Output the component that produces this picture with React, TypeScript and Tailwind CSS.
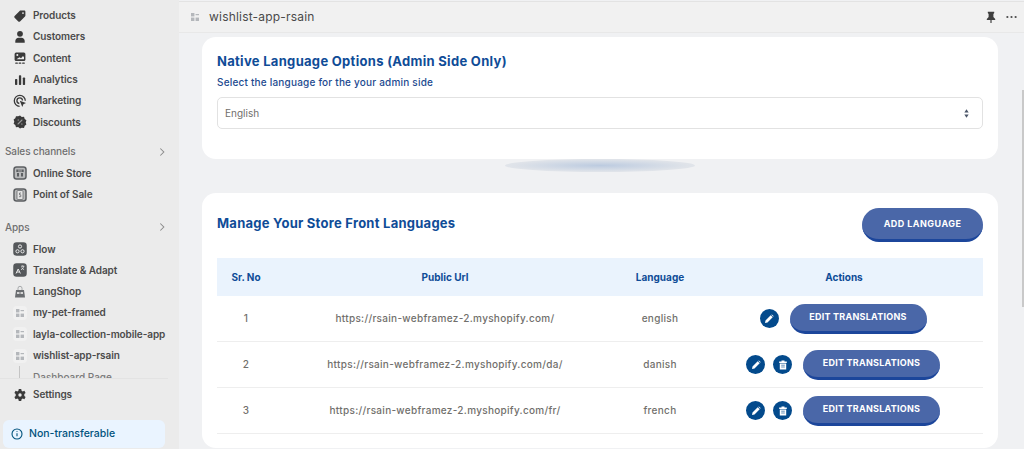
import React from "react";

const Tile = ({ children, soft }: { children: React.ReactNode; soft?: boolean }) => (
  <svg viewBox="0 0 14 14" className="h-[14px] w-[14px]">
    <rect
      x="1"
      y="1"
      width="12"
      height="12"
      rx="2.500"
      fill={soft ? "#b9babb" : "#55585b"}
      stroke={soft ? "#5c5f62" : "#55585b"}
      strokeWidth="1.500"
    />
    {children}
  </svg>
);

const AppDot = () => (
  <span className="flex h-[14px] w-[14px] items-center justify-center rounded-sm bg-[#f1f1f1]">
    <svg viewBox="0 0 8 8" className="h-[8px] w-[8px]" fill="#b4b7bb">
      <rect x="0" y="0" width="3.400" height="3.400" />
      <rect x="4.600" y="1" width="3.400" height="1.200" />
      <rect x="0" y="4.600" width="3.400" height="3.400" />
      <rect x="4.600" y="4.600" width="3.400" height="3.400" />
    </svg>
  </span>
);

const icons: Record<string, React.ReactNode> = {
  products: (
    <svg viewBox="0 0 14 14" className="h-[14px] w-[14px]" fill="#3a3a3a">
      <path d="M7.600 1.600h3.600c.7 0 1.200.5 1.200 1.200v3.600c0 .4-.1.7-.4 1l-5 5c-.5.5-1.200.5-1.700 0L1.600 8.700c-.5-.5-.5-1.200 0-1.700l5-5c.3-.3.600-.4 1-.4zM10 3.200a.9.9 0 1 0 0 1.800.9.9 0 0 0 0-1.800z" />
    </svg>
  ),
  customers: (
    <svg viewBox="0 0 14 14" className="h-[14px] w-[14px]" fill="#3a3a3a">
      <circle cx="7" cy="3.800" r="2.900" />
      <path d="M2.300 12.800v-1.700c0-2 1.500-3.300 3.300-3.300h2.800c1.800 0 3.300 1.300 3.300 3.300v1.700z" />
    </svg>
  ),
  content: (
    <svg viewBox="0 0 14 14" className="h-[14px] w-[14px]">
      <rect x="1.600" y="1.500" width="10.800" height="8.500" rx="1.500" fill="#3a3a3a" />
      <circle cx="4.300" cy="4" r="1" fill="#ebebeb" />
      <path d="M3.500 8.300l3-2 1.500 1 2-2.300 1 1.300v2z" fill="#ebebeb" />
      <rect x="2.200" y="11.500" width="2.700" height="1.200" rx=".5" fill="#3a3a3a" />
      <rect x="5.600" y="11.500" width="2.700" height="1.200" rx=".5" fill="#3a3a3a" />
      <rect x="9.100" y="11.500" width="2.700" height="1.200" rx=".5" fill="#3a3a3a" />
    </svg>
  ),
  analytics: (
    <svg viewBox="0 0 14 14" className="h-[14px] w-[14px]" fill="#3a3a3a">
      <rect x="2" y="6" width="2.300" height="6" rx=".7" />
      <rect x="5.900" y="2.200" width="2.300" height="9.800" rx=".7" />
      <rect x="9.800" y="4.600" width="2.300" height="7.400" rx=".7" />
    </svg>
  ),
  marketing: (
    <svg viewBox="0 0 14 14" className="h-[14px] w-[14px]" fill="none" stroke="#3a3a3a">
      <path d="M6.600 12.300a5.500 5.500 0 1 1 5.700-5.500" strokeWidth="1.300" />
      <path d="M6.300 9.500a2.800 2.800 0 1 1 3.200-3" strokeWidth="1.300" />
      <path d="M6.800 6.800l6.200 2.300-2.600 1.100-1.100 2.700z" fill="#3a3a3a" stroke="none" />
    </svg>
  ),
  discounts: (
    <svg viewBox="0 0 14 14" className="h-[14px] w-[14px]">
      <path
        d="M7 .6l1.800 1.300 2.200-.1.700 2.100 1.700 1.400-.7 2.100.7 2.100-1.700 1.300-.7 2.100-2.200-.1L7 13.400l-1.800-1.300-2.200.1-.7-2.100L.6 8.800 1.300 6.700.6 4.600l1.700-1.300.7-2.100 2.200.1z"
        fill="#3a3a3a"
      />
      <path d="M5 9l4-4M5 5h.6M8.500 9h.6" stroke="#9a9a9a" strokeWidth="1.100" strokeLinecap="round" />
    </svg>
  ),
  store: (
    <Tile soft>
      <path d="M3.300 3.500h7.400v2.400H3.300zM4 7h2v3.500H4zM8 7h2v3.500H8z" fill="#5c5f62" />
      <path d="M6 3.500v2.400M8 3.500v2.400" stroke="#d8d8d8" strokeWidth=".7" />
    </Tile>
  ),
  pos: (
    <Tile soft>
      <rect x="4" y="2.500" width="6" height="9" rx="1" fill="#e4e4e4" stroke="#5c5f62" strokeWidth=".7" />
      <path d="M8 5H6.500v1.800H7.800v1.900H6" stroke="#5c5f62" strokeWidth=".7" fill="none" />
    </Tile>
  ),
  flow: (
    <Tile>
      <g fill="none" stroke="#ebebeb" strokeWidth="1">
        <circle cx="7" cy="4.500" r="1.600" />
        <circle cx="4.500" cy="9.300" r="1.600" />
        <circle cx="9.500" cy="9.300" r="1.600" />
      </g>
    </Tile>
  ),
  translate: (
    <Tile>
      <path d="M3 10.500l2.200-4.500 2.200 4.500M3.900 9h2.700" stroke="#ebebeb" strokeWidth="1" fill="none" />
      <path d="M8 3.200h3.300M9.600 2.500v.8M10.700 3.300c-.3 1.700-1.300 2.800-2.700 3.400M8.700 4.500c.5 1 1.300 1.700 2.400 2.200" stroke="#ebebeb" strokeWidth=".8" fill="none" />
    </Tile>
  ),
  langshop: (
    <svg viewBox="0 0 14 14" className="h-[14px] w-[14px]">
      <path d="M3 5h8l1 7.500H2z" fill="#6a6d70" />
      <path d="M5 5V3.300a2 2 0 0 1 4 0V5" stroke="#a8abad" fill="none" />
      <rect x="4" y="7" width="2.500" height="2" fill="#d5d5d5" />
      <rect x="7.500" y="7" width="2.500" height="2" fill="#d5d5d5" />
    </svg>
  ),
  app: <AppDot />,
  settings: (
    <svg viewBox="0 0 14 14" className="h-[14px] w-[14px]">
      <path
        d="M5.800 1h2.400l.4 1.800 1.100.6 1.700-.6 1.200 2.100-1.300 1.200v1.800l1.300 1.200-1.200 2.100-1.700-.6-1.100.6L8.200 13H5.800l-.4-1.800-1.100-.6-1.700.6-1.200-2.100 1.300-1.200V6.100L1.400 4.900l1.200-2.100 1.700.6 1.100-.6z"
        fill="#3a3a3a"
      />
      <circle cx="7" cy="7" r="1.700" fill="#ebebeb" />
    </svg>
  ),
};

const Row = ({ icon, label }: { icon: string; label: string }) => (
  <div className="flex h-[21.3px] items-center gap-[6px] pl-[13px]">
    <span className="flex w-[14px] justify-center">{icons[icon]}</span>
    <span className="whitespace-nowrap text-[10px] font-semibold tracking-[-0.08px] text-[#4a4a4a]">{label}</span>
  </div>
);

const SectionLabel = ({ label }: { label: string }) => (
  <div className="flex h-[16px] items-center justify-between pl-[5px] pr-[13px]">
    <span className="text-[10px] font-medium tracking-[-0.1px] text-[#6f6f6f]">{label}</span>
    <svg viewBox="0 0 8 10" className="h-[10px] w-[7px]" fill="none" stroke="#8a8a8a" strokeWidth="1.200">
      <path d="M1.500 1l4 4-4 4" />
    </svg>
  </div>
);

const Sidebar = () => (
  <aside className="flex h-[449px] w-[179px] shrink-0 flex-col overflow-hidden bg-[#ebebeb] font-['Inter',sans-serif]">
    <div className="h-[378px] shrink-0 overflow-hidden pt-[5px]">
      <Row icon="products" label="Products" />
      <Row icon="customers" label="Customers" />
      <Row icon="content" label="Content" />
      <Row icon="analytics" label="Analytics" />
      <Row icon="marketing" label="Marketing" />
      <Row icon="discounts" label="Discounts" />
      <div className="mt-[11px]">
        <SectionLabel label="Sales channels" />
      </div>
      <div className="mt-[3px]">
        <Row icon="store" label="Online Store" />
        <Row icon="pos" label="Point of Sale" />
      </div>
      <div className="mt-[14px]">
        <SectionLabel label="Apps" />
      </div>
      <div className="mt-[3px]">
        <Row icon="flow" label="Flow" />
        <Row icon="translate" label="Translate & Adapt" />
        <Row icon="langshop" label="LangShop" />
        <Row icon="app" label="my-pet-framed" />
        <Row icon="app" label="layla-collection-mobile-app" />
        <Row icon="app" label="wishlist-app-rsain" />
      </div>
      <div className="ml-[19px] flex h-[20px] border-l border-[#c4c4c4] pl-[13px] pt-[4px]">
        <span className="text-[10px] font-medium text-[#7a7a7a]">Dashboard Page</span>
      </div>
    </div>
    <div className="mr-[11px] h-px shrink-0 bg-[#e3e3e3]" />
    <div className="mt-[5px]">
      <Row icon="settings" label="Settings" />
    </div>
    <div className="mx-[3px] mt-[15px] flex h-[28px] w-[162px] items-center gap-[6px] rounded-md bg-[#eaf4ff] pl-[8px]">
      <svg viewBox="0 0 12 12" className="h-[12px] w-[12px]" fill="none" stroke="#00527c" strokeWidth="1.100">
        <circle cx="6" cy="6" r="5" />
        <path d="M6 5.300v3M6 3.200v.9" />
      </svg>
      <span className="text-[10.5px] font-medium text-[#00527c]">Non-transferable</span>
    </div>
  </aside>
);

const PencilBadge = () => (
  <span className="flex h-[19px] w-[19px] items-center justify-center rounded-full bg-[#034a8c]">
    <svg viewBox="0 0 10 10" className="h-[10px] w-[10px]" fill="#ffffff">
      <path d="M1 9l.5-2.500L6.700 1.300l2 2L3.500 8.500zM7.300.8l.6-.4 1.700 1.700-.4.6z" />
    </svg>
  </span>
);

const TrashBadge = () => (
  <span className="flex h-[19px] w-[19px] items-center justify-center rounded-full bg-[#034a8c]">
    <svg viewBox="0 0 10 10" className="h-[10px] w-[10px]" fill="#ffffff">
      <path d="M3.500 1.600V.6h3v1h2.300v1.300H1.200V1.600zM1.800 3.600h6.400v5.800H1.800z" />
      <path d="M3.200 5.200h3.600M3.200 7h3.600" stroke="#034a8c" strokeWidth=".6" />
    </svg>
  </span>
);

const languages = [
  { no: 1, url: "https://rsain-webframez-2.myshopify.com/", lang: "english", del: false },
  { no: 2, url: "https://rsain-webframez-2.myshopify.com/da/", lang: "danish", del: true },
  { no: 3, url: "https://rsain-webframez-2.myshopify.com/fr/", lang: "french", del: true },
];

const LanguageTable = () => (
  <div>
    <div className="grid h-[38px] grid-cols-[58px_340px_90px_1fr] items-center bg-[#eaf3fd] text-center text-[10px] font-bold text-[#0f4c97]">
      <span>Sr. No</span>
      <span>Public Url</span>
      <span>Language</span>
      <span>Actions</span>
    </div>
    {languages.map((row) => (
      <div
        key={row.no}
        className="grid h-[46px] grid-cols-[58px_340px_90px_1fr] items-center border-b border-[#eeeeee] text-center text-[10px] font-medium tracking-[0.3px] text-[#716f6c]"
      >
        <span>{row.no}</span>
        <span>{row.url}</span>
        <span>{row.lang}</span>
        <div className="flex items-center justify-center pr-[2px]">
          <div className="flex items-center gap-[8px]">
            <PencilBadge />
            {row.del && <TrashBadge />}
          </div>
          <button className="ml-[11px] h-[30px] w-[137px] rounded-full border-b-[3px] border-[#1c469b] bg-[#4a67a8] text-[9px] font-bold tracking-[0.25px] text-white">
            EDIT TRANSLATIONS
          </button>
        </div>
      </div>
    ))}
  </div>
);

export default function App() {
  return (
    <div className="flex h-[449px] w-[1024px] overflow-hidden bg-[#f0f1f3] font-['Inter',sans-serif]">
      <Sidebar />
      <main className="relative flex h-[449px] min-w-0 flex-1 flex-col">
        <header className="mt-px flex h-[32px] shrink-0 items-center justify-between border-t border-b border-t-[#e3e3e3] border-b-[#e8e8e8] bg-[#f1f1f1] pl-[9px] pr-[7px]">
          <div className="flex items-center gap-[7px]">
            <AppDot />
            <span className="text-[12px] tracking-[0.2px] text-[#4a4a4a]">wishlist-app-rsain</span>
          </div>
          <div className="flex items-center gap-[10px]">
            <svg viewBox="0 0 10 12" className="h-[12px] w-[10px]" fill="#3f3f3f">
              <path d="M1.800.8h6.400v1.300L7.400 3v3l1.800 2v1H5.600v2.800L5 12.400l-.6-.6V9H.8V8l1.800-2V3l-.8-.9z" />
            </svg>
            <svg viewBox="0 0 12 4" className="h-[4px] w-[11px]" fill="#4a4a4a">
              <circle cx="1.500" cy="2" r="1.200" />
              <circle cx="6" cy="2" r="1.200" />
              <circle cx="10.500" cy="2" r="1.200" />
            </svg>
          </div>
        </header>
        <div className="flex min-h-0 flex-1 flex-col overflow-hidden pl-[23px] pr-[26px] pt-[4px]">
          <section className="h-[122px] shrink-0 rounded-[14px] bg-white px-[15px] pt-[15px]">
            <h2 className="text-[13px] font-bold leading-[18px] tracking-[0.3px] text-[#0f4c97]">
              Native Language Options (Admin Side Only)
            </h2>
            <p className="mt-[5px] text-[10px] font-medium leading-[14px] tracking-[0.2px] text-[#1c4a8f]">
              Select the language for the your admin side
            </p>
            <div className="mt-[8px] flex h-[32px] items-center justify-between rounded-[5px] border border-[#e2e2e2] pl-[7px] pr-[13px]">
              <span className="text-[10px] text-[#716f6c]">English</span>
              <svg viewBox="0 0 6 10" className="h-[9px] w-[5px]" fill="#4a5568">
                <path d="M3 0l2.600 3.800H.4zM3 10L.4 6.200h5.200z" />
              </svg>
            </div>
          </section>
          <div className="flex h-[34px] shrink-0 justify-center">
            <div className="h-[13px] w-[190px] rounded-[50%] bg-[radial-gradient(ellipse_at_center,#bccbe0_0%,#dfe3e9_65%,#e8eaee_100%)]" />
          </div>
          <section className="shrink-0 rounded-[14px] bg-white px-[15px] pb-[14px]">
            <div className="flex h-[65px] items-start justify-between">
              <h2 className="mt-[21px] text-[13px] font-bold tracking-[0.25px] text-[#0f4c97]">
                Manage Your Store Front Languages
              </h2>
              <button className="mt-[15px] h-[34px] w-[121px] rounded-full border-b-[3px] border-[#1c469b] bg-[#4a67a8] text-[9px] font-bold tracking-[0.45px] text-white">
                ADD LANGUAGE
              </button>
            </div>
            <LanguageTable />
          </section>
        </div>
        <div className="absolute right-0 top-[90px] h-[217px] w-[2px] bg-[#c9c9c9]" />
      </main>
    </div>
  );
}
